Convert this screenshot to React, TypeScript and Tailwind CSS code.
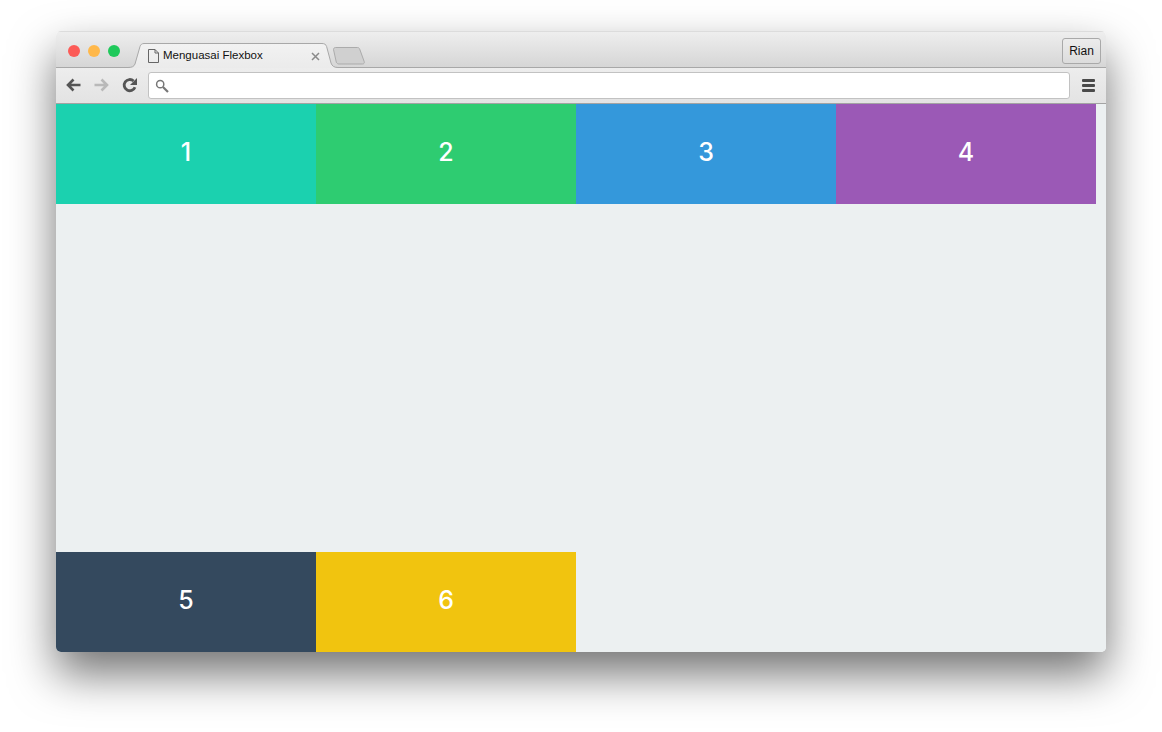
const boxes = [
  { label: "1", color: "bg-[#1bd1af]" },
  { label: "2", color: "bg-[#2ecc71]" },
  { label: "3", color: "bg-[#3498db]" },
  { label: "4", color: "bg-[#9b59b6]" },
  { label: "5", color: "bg-[#34495e]" },
  { label: "6", color: "bg-[#f1c40f]" },
];

const tabOutline =
  "M0 24.5 C4 24.5 6 23.5 7 21 L12 3.5 C12.6 1.5 14 .5 16 .5 L194 .5 C196.5 .5 198 1.5 198.6 3.5 L203 20 C204 23 206 24.5 210 24.5 L212 24.5";

function TabShape() {
  return (
    <svg className="absolute inset-0" width="212" height="25" viewBox="0 0 212 25">
      <defs>
        <linearGradient id="tabFill" x1="0" y1="0" x2="0" y2="1">
          <stop offset="0" stopColor="#f2f2f2" />
          <stop offset="1" stopColor="#ebebeb" />
        </linearGradient>
      </defs>
      <path d={tabOutline + " L212 25 L0 25 Z"} fill="url(#tabFill)" />
      <path d={tabOutline} fill="none" stroke="#a8a8a8" />
    </svg>
  );
}

function Toolbar() {
  return (
    <div className="h-[36px] flex items-center pl-[9px] pr-[11px] pb-[1px] border-b border-[#a3a3a3] bg-gradient-to-b from-[#ededed] to-[#e3e3e3]">
      <svg width="18" height="18" viewBox="0 0 18 18" fill="none" stroke="#555" strokeWidth="2.6">
        <path d="M15.5 9H3M8.5 3.5 3 9 8.5 14.5" />
      </svg>
      <svg className="ml-[10px]" width="18" height="18" viewBox="0 0 18 18" fill="none" stroke="#b9b9b9" strokeWidth="2.6">
        <path d="M1.5 9H14M8.5 3.5 14 9 8.5 14.5" />
      </svg>
      <svg className="ml-[10px]" width="18" height="18" viewBox="0 0 18 18" fill="none">
        <path d="M14 11.2A5.6 5.6 0 1 1 12.6 5" stroke="#555" strokeWidth="2.8" />
        <path d="M16 2v7h-7z" fill="#555" />
      </svg>
      <div className="ml-[9px] mt-[1px] flex-1 h-[27px] flex items-center pl-[6px] bg-white border border-[#c2c2c2] rounded-[3px]">
        <svg width="14" height="14" viewBox="0 0 14 14" fill="none" stroke="#777">
          <circle cx="5.2" cy="5.2" r="3.6" strokeWidth="1.5" />
          <path d="M8 8l5 5" strokeWidth="2.2" />
        </svg>
      </div>
      <div className="ml-[12px] mt-[1px] w-[13px] flex flex-col gap-[2px]">
        <span className="h-[3px] rounded-[1px] bg-[#4a4a4a]" />
        <span className="h-[3px] rounded-[1px] bg-[#4a4a4a]" />
        <span className="h-[3px] rounded-[1px] bg-[#4a4a4a]" />
      </div>
    </div>
  );
}

function TabStrip() {
  return (
    <div className="h-[37px] flex items-start pl-[12px] pr-[5px] border-t border-b border-t-[#dcdcdc] border-b-[#a8a8a8] bg-gradient-to-b from-[#eeeeee] to-[#d6d6d6]">
      <div className="mt-[13px] flex gap-[8px]">
        <span className="w-[12px] h-[12px] rounded-full bg-[#fc5b57]" />
        <span className="w-[12px] h-[12px] rounded-full bg-[#ffb84a]" />
        <span className="w-[12px] h-[12px] rounded-full bg-[#1fc95b]" />
      </div>
      <div className="relative ml-[8px] mt-[11px] w-[212px] h-[25px] shrink-0">
        <TabShape />
        <div className="relative h-full flex items-center pl-[20px] pr-[20px] pt-[1px]">
          <svg width="11" height="14" viewBox="0 0 11 14" fill="none" stroke="#666">
            <path d="M.5.5h6.5l3.5 3.5v9.5h-10zM7 .5v3.5h3.5" />
          </svg>
          <span className="ml-[4px] text-[11.5px] text-[#111] font-['Liberation_Sans',sans-serif]">Menguasai Flexbox</span>
          <svg className="ml-auto" width="9" height="9" viewBox="0 0 9 9" stroke="#8a8a8a" strokeWidth="1.5">
            <path d="M1 1l7 7M8 1l-7 7" />
          </svg>
        </div>
      </div>
      <svg className="-ml-[8px] mt-[15px] shrink-0" width="34" height="18" viewBox="0 0 34 18">
        <path
          d="M1.5 2.5C1.5 1.4 2.3.5 3.5.5h22c1 0 1.8.6 2.2 1.6l4.5 12.5c.4 1.3-.2 2.4-1.7 2.4H7c-1.4 0-2.2-.7-2.7-1.8z"
          fill="#d0d0d0"
          stroke="#ababab"
        />
      </svg>
      <button className="ml-auto mt-[6px] w-[39px] h-[26px] flex items-center justify-center text-[12px] text-[#111] font-['Liberation_Sans',sans-serif] border border-[#a9a9a9] rounded-[3px] bg-gradient-to-b from-[#ececec] to-[#dcdcdc]">
        Rian
      </button>
    </div>
  );
}

export default function App() {
  return (
    <div className="w-[1162px] h-[732px] bg-white overflow-hidden pt-[31px] pl-[56px]">
      <div className="w-[1050px] h-[621px] flex flex-col rounded-[5px] overflow-hidden shadow-[0_22px_45px_0_rgba(0,0,0,0.55)]">
        <TabStrip />
        <Toolbar />
        <div className="flex-1 flex flex-wrap content-between pr-[10px] bg-[#ecf0f1]">
          {boxes.map((box) => (
            <div
              key={box.label}
              className={`w-[260px] h-[100px] flex items-center justify-center pb-[2px] text-[25px] font-medium text-white font-['Inter',sans-serif] ${box.color}`}
            >
              {box.label}
            </div>
          ))}
        </div>
      </div>
    </div>
  );
}
